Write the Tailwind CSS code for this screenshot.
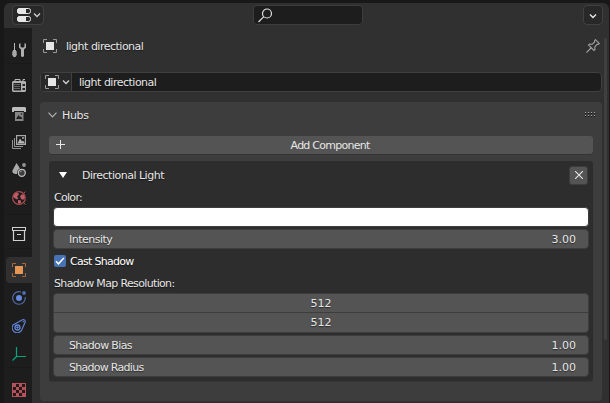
<!DOCTYPE html>
<html lang="en">
<head>
<meta charset="utf-8">
<title>Properties</title>
<script src="https://cdn.jsdelivr.net/npm/@tailwindcss/browser@4"></script>
</head>
<body class="w-[610px] h-[403px] overflow-hidden bg-[#181818] pt-[3px] pl-[4px] pr-px text-[11px] leading-[18px] tracking-[-0.5px] text-[#e6e6e6] font-['DejaVu_Sans',sans-serif] [text-shadow:0_1px_1px_#00000080]">
<div class="h-[400px] rounded-t-md overflow-hidden bg-[#303030] flex flex-col">
  <header class="h-[25px] shrink-0 flex items-start pt-[2px] pl-2 pr-[6px]">
    <button class="w-[32px] h-[20px] rounded border border-[#414141] bg-[#282828] flex items-center pl-[4px] gap-[2px]">
      <svg width="14" height="14" viewBox="0 0 14 14"><rect x=".5" y=".5" width="13" height="5" rx="2" fill="#282828" stroke="#e6e6e6"/><path d="M2 0h7v6H2L0 4V2z" fill="#e6e6e6"/><rect x=".5" y="8.500" width="13" height="5" rx="2" fill="#282828" stroke="#e6e6e6"/><path d="M2 8h7v6H2l-2-2v-2z" fill="#e6e6e6"/></svg>
      <svg width="8" height="6" viewBox="0 0 8 6" fill="none" stroke="#d0d0d0" stroke-width="1.300"><path d="M1 1.500 4 4.500 7 1.500"/></svg>
    </button>
    <div class="w-[110px] h-[20px] ml-[209px] mr-auto rounded border border-[#3d3d3d] bg-[#1d1d1d] flex items-center pl-[4px]">
      <svg width="15" height="15" viewBox="0 0 15 15" fill="none" stroke="#e0e0e0" stroke-width="1.200"><circle cx="9" cy="5.500" r="4.500"/><path d="M5.800 8.700.500 14"/></svg>
    </div>
    <button class="w-[20px] h-[20px] rounded border border-[#414141] bg-[#282828] flex items-center justify-center pt-px">
      <svg width="8" height="6" viewBox="0 0 8 6" fill="none" stroke="#e6e6e6" stroke-width="1.400"><path d="M1 1.500 4 4.500 7 1.500"/></svg>
    </button>
  </header>
  <div class="flex h-[375px]">
    <nav class="w-[28px] shrink-0 bg-[#1d1d1d] flex flex-col items-end">
      <div class="h-[36px] w-[26px] pt-[9px] flex items-center justify-center border-b border-[#191919]">
        <svg width="14" height="14" viewBox="0 0 14 14"><path d="M2 0h1v8H2z" fill="#b8b8b8"/><path d="M1 7h3v1l1 1-.5 1 .5 1.500L3.500 14h-2L0 11.500.5 10 0 9l1-1z" fill="#a8a8a8"/><path d="M8.500 0v3.500l1 1h2l1-1V0L14 1v3.500L12 6.500V13l-1 1h-1l-1-1V6.500L7 4.500V1z" fill="#b0b0b0"/></svg>
      </div>
      <div class="h-[43px] w-[26px] pb-[1px] flex items-center justify-center">
        <svg width="14" height="14" viewBox="0 0 14 14"><path d="M3 3V1.500h5V3M11 3V1.500h2" fill="none" stroke="#b8b8b8"/><path d="M1 3h12l1 1v9l-1 1H1l-1-1V4z" fill="#b0b0b0"/><path d="M1.500 5H9v7.500H1.500zM10.500 6H13v2h-2.500zM10.500 10H13v2h-2.500z" fill="#222"/><path d="M2 6.500h6M2 8.500h6M2 10.500h6" stroke="#626262"/></svg>
      </div>
      <div class="h-[14px] w-[26px] flex items-center justify-center">
        <svg width="14" height="14" viewBox="0 0 14 14"><path d="M1 0h12l1 1v4h-2V4H2v1H0V1z" fill="#bcbcbc"/><path d="M3 5h8.500v9H3z" fill="#858585"/><path d="m4 12 2.500-4 1.500 2 .8-.8L10.500 12z" fill="#222"/><circle cx="9.500" cy="7" r=".8" fill="#222"/></svg>
      </div>
      <div class="h-[42px] w-[26px] flex items-center justify-center">
        <svg width="14" height="14" viewBox="0 0 14 14" fill="none" stroke="#a8a8a8"><path d="M.5 5v8.500H9M2.500 3v8.500H11" stroke="#949494"/><rect x="4.600" y=".6" width="8.800" height="8.800" stroke-width="1.200"/><path d="m5.500 8.500 2.500-5 2 3 1-1L13 8.500z" fill="#b8b8b8" stroke="none"/><circle cx="11" cy="3" r=".9" fill="#b8b8b8" stroke="none"/></svg>
      </div>
      <div class="h-[14px] w-[26px] flex items-center justify-center">
        <svg width="14" height="14" viewBox="0 0 14 14"><path d="M4.500 0 1 6.500C-1 10 2 11 5 11 5 8 6 6 8 5.500z" fill="#aaa"/><circle cx="12" cy="2" r="1.900" fill="#949494"/><circle cx="9.800" cy="9.800" r="3.500" fill="#3c3c3c" stroke="#bdbdbd" stroke-width="1.300"/><path d="M8 9.500q.3-1.500 1.800-1.500" stroke="#999" fill="none"/></svg>
      </div>
      <div class="h-[38px] w-[26px] pt-[4px] flex items-center justify-center border-b border-[#191919]">
        <svg width="14" height="14" viewBox="0 0 14 14"><circle cx="7" cy="7" r="6.300" fill="none" stroke="#a94c54" stroke-width="1.200"/><path d="m11 3 2.500-2.500M11 11l2.500 2.500" stroke="#a94c54"/><path d="M1 5.500 3.500 2h2.500l1 1.500L5.500 5l-.5 1 1.500 1L5 8.500 2.500 7zM8 5.500l1.500-2h2L13 6l-1 2.500H9.500zM6 9l3 .5v2L7.500 13 6 12z" fill="#c05a64"/></svg>
      </div>
      <div class="h-[34px] w-[26px] pt-[4px] flex items-center justify-center border-b border-[#191919]">
        <svg width="14" height="14" viewBox="0 0 14 14" fill="none" stroke="#d0d0d0"><rect x=".5" y=".5" width="13" height="3"/><path d="M1.500 3.500v10h11v-10M5 7.500h4" stroke-width="1.200"/></svg>
      </div>
      <div class="h-[26px] w-[26px] mt-[8px] rounded-l bg-[#303030] flex items-center justify-center">
        <svg width="14" height="14" viewBox="0 0 14 14"><path d="M.5 4V.5H4M10 .5h3.500V4M13.500 10v3.500H10M4 13.500H.5V10" fill="none" stroke="#a8683c"/><path d="M3 3h8v8H3z" fill="#e59654"/></svg>
      </div>
      <div class="h-[30px] w-[26px] flex items-center justify-center">
        <svg width="14" height="14" viewBox="0 0 14 14"><path d="M9 1A6.300 6.300 0 1 0 13.200 6" fill="none" stroke="#5069a6" stroke-width="1.200"/><circle cx="7" cy="7" r="3" fill="#668ae0"/><circle cx="12" cy="2" r="1.900" fill="#4d6cae"/></svg>
      </div>
      <div class="h-[26px] w-[26px] flex items-center justify-center">
        <svg width="14" height="14" viewBox="0 0 14 14" fill="none" stroke="#6385d8"><path d="M1.300 5.700 10.500.8q2.500-.7 2.800 2L9.700 11a5 5 0 1 1-8.400-5.300z" stroke-width="1.100"/><circle cx="5.500" cy="8.500" r="2.500" stroke-width="1.300"/><circle cx="5.500" cy="8.500" r=".8" fill="#6385d8"/><circle cx="11.200" cy="2.800" r=".7" fill="#6385d8" stroke="none"/></svg>
      </div>
      <div class="h-[29px] w-[26px] pt-[2px] flex items-center justify-center border-b border-[#191919]">
        <svg width="14" height="14" viewBox="0 0 14 14" fill="none" stroke="#00a67e" stroke-width="1.200"><path d="M4.500 0v9.500H14M4.500 9.500.500 13.500"/></svg>
      </div>
      <div class="h-[35px] w-[26px] pt-[8px] flex items-center justify-center">
        <svg width="14" height="14" viewBox="0 0 14 14"><path d="M0 0h14v14H0z" fill="#b3525b"/><path d="M4 1h3v3H4zM10 1h3v3h-3zM1 4h3v3H1zM7 4h3v3H7zM4 7h3v3H4zM10 7h3v3h-3zM1 10h3v3H1zM7 10h3v3H7z" fill="#241819"/></svg>
      </div>
    </nav>
    <main class="w-[570px] pl-[8px] flex flex-col">
      <div class="h-[36px] flex items-center pl-[3px] pr-[2px]">
        <svg width="14" height="14" viewBox="0 0 14 14"><path d="M.5 4V.5H4M10 .5h3.500V4M13.500 10v3.500H10M4 13.500H.5V10" fill="none" stroke="#999"/><path d="M3 3h8v8H3z" fill="#e6e6e6"/></svg>
        <span class="ml-[9px] pt-[2px] flex-1">light directional</span>
        <svg width="14" height="14" viewBox="0 0 14 14" fill="none" stroke="#a0a0a0" stroke-width="1.100"><path d="M9.500.7 13.300 4.500 12 5.500l-1-.2L8.800 8l.2 2.500-1 1L2.500 6l1-1 2.700.2L8.700 3 8.500 1.700zM5 9 .4 13.600"/></svg>
      </div>
      <div class="h-[20px] mt-[8px] rounded border border-[#404040] bg-[#1d1d1d] flex items-center overflow-hidden">
        <div class="w-[31px] h-full bg-[#282828] border-r border-[#404040] flex items-center pl-[4px] gap-[3px]">
          <svg width="14" height="14" viewBox="0 0 14 14"><path d="M.5 4V.5H4M10 .5h3.500V4M13.500 10v3.500H10M4 13.500H.5V10" fill="none" stroke="#999"/><path d="M3 3h8v8H3z" fill="#e6e6e6"/></svg>
          <svg width="8" height="6" viewBox="0 0 8 6" fill="none" stroke="#d0d0d0" stroke-width="1.300"><path d="M1 1.500 4 4.500 7 1.500"/></svg>
        </div>
        <span class="ml-[7px] pt-[2px]">light directional</span>
      </div>
      <section class="h-[299px] mt-[10px] rounded bg-[#3d3d3d] px-[9px]">
        <div class="h-[34px] pb-[8px] flex items-center -ml-[1px] -mr-[4px]">
          <svg width="9" height="6" viewBox="0 0 9 6" fill="none" stroke="#b5b5b5" stroke-width="1.100"><path d="M.5.700 4.500 4.900 8.500.700"/></svg>
          <span class="ml-[5px] pt-[2px] flex-1 tracking-[-0.35px]">Hubs</span>
          <svg width="12" height="6" viewBox="0 0 12 6" fill="none"><path d="M0 .5h12M0 3.500h12" stroke="#aaa" stroke-dasharray="1 2"/><path d="M0 1.500h12M0 4.500h12" stroke="#111" stroke-dasharray="1 2"/></svg>
        </div>
        <button class="w-full h-[18px] rounded-[3px] bg-[#545454] shadow-[0_1px_0_#343434] flex items-center pl-[7px]">
          <svg class="-mt-px" width="9" height="9" viewBox="0 0 9 9" stroke="#e6e6e6"><path d="M4.500 0v9M0 4.500h9"/></svg>
          <span class="flex-1 text-center pl-[2px] pt-[2px] tracking-[-0.75px]">Add Component</span>
        </button>
        <div class="h-[220px] mt-[7px] rounded-[3px] bg-[#2d2d2d] px-[5px] pt-[4px] shadow-[0_1px_0_#353535]">
          <div class="h-[20px] flex items-center pl-[5px]">
            <svg width="8" height="6" viewBox="0 0 8 6"><path d="M0 0h8L4 6z" fill="#fff"/></svg>
            <span class="ml-[15px] pt-[2px] flex-1">Directional Light</span>
            <button class="w-[19px] h-[19px] rounded-[3px] bg-[#545454] border border-[#3d3d3d] flex items-center justify-center">
              <svg width="8" height="8" viewBox="0 0 8 8" stroke="#e6e6e6" stroke-width="1.100"><path d="M0 0l8 8M8 0 0 8"/></svg>
            </button>
          </div>
          <div class="h-[22px] pt-[4px] tracking-[-0.7px]">Color:</div>
          <div class="h-[20px] rounded border border-[#3d3d3d] bg-white -mx-[1px]"></div>
          <div class="h-[20px] mt-[2px] -mx-[1px] rounded border border-[#3d3d3d] bg-[#545454] flex items-center justify-between pt-[2px] pl-[15px] pr-[12px]"><span class="tracking-[-0.5px]">Intensity</span><span class="tracking-[0px]">3.00</span></div>
          <div class="h-[24px] flex items-center gap-[4px]">
            <span class="w-[12px] h-[12px] rounded-[2px] bg-[#4772b3] flex items-center justify-center"><svg width="10" height="8" viewBox="0 0 10 8" fill="none" stroke="#fff" stroke-width="1.500"><path d="M1 4.300 3.500 6.800 8.800 1"/></svg></span>
            <span class="text-white pt-[2px] tracking-[-0.7px]">Cast Shadow</span>
          </div>
          <div class="h-[20px] pt-[2px] flex items-center tracking-[-0.65px]">Shadow Map Resolution:</div>
          <div class="h-[40px] -mx-[1px] rounded border border-[#3d3d3d] bg-[#545454] text-center tracking-[0px]">
            <div class="h-[19px] leading-[19px] border-b border-[#3d3d3d]">512</div>
            <div class="h-[19px] leading-[19px]">512</div>
          </div>
          <div class="h-[20px] mt-[2px] -mx-[1px] rounded border border-[#3d3d3d] bg-[#545454] flex items-center justify-between pt-[2px] pl-[15px] pr-[12px]"><span class="tracking-[-0.65px]">Shadow Bias</span><span class="tracking-[0px]">1.00</span></div>
          <div class="h-[20px] mt-[2px] -mx-[1px] rounded border border-[#3d3d3d] bg-[#545454] flex items-center justify-between pt-[2px] pl-[15px] pr-[12px]"><span class="tracking-[-0.72px]">Shadow Radius</span><span class="tracking-[0px]">1.00</span></div>
        </div>
      </section>
    </main>
    <div class="w-[3px] h-[302px] mt-[10px] ml-[2px] rounded bg-[#3f3f3f]"></div>
  </div>
</div>
</body>
</html>
